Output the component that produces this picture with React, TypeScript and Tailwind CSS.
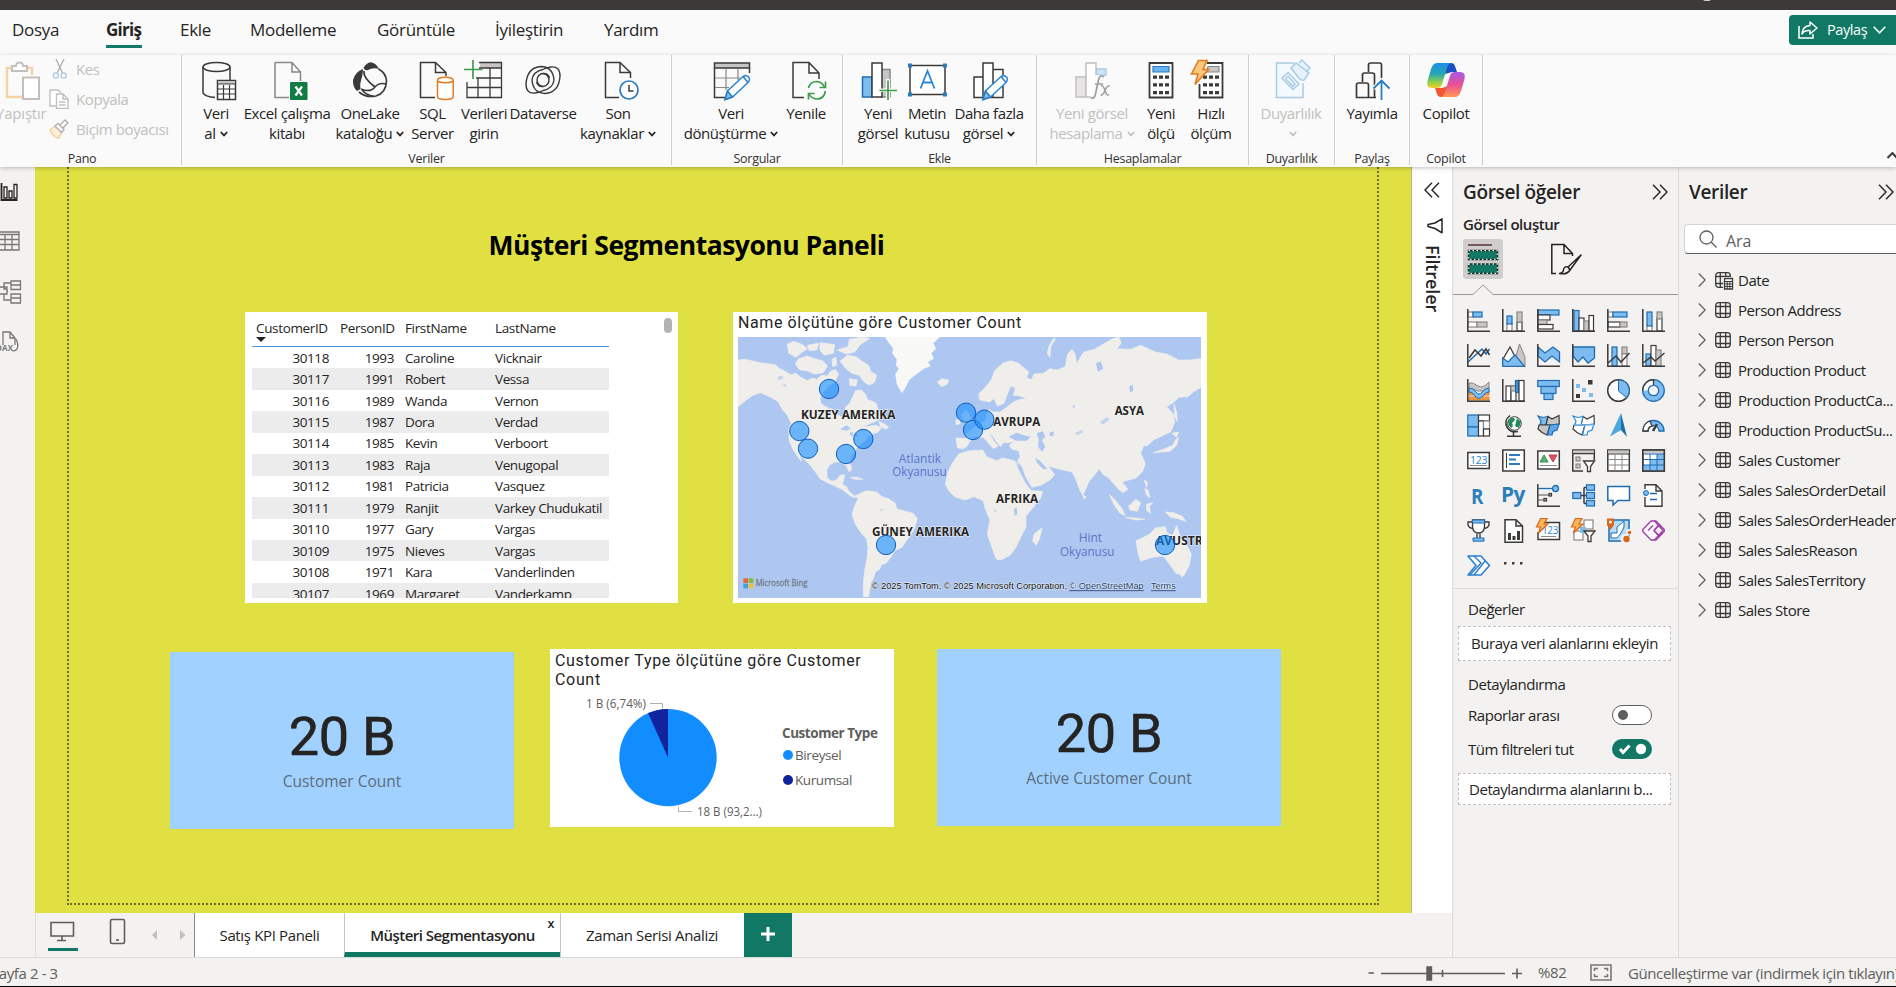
import React from "react";

const K = "#3b3a39";
const B = "#1f6cb0";
const F = "#7dbcf0";
const G = "#8a8886";
const GF = "#c8c6c4";

/* ---------- ribbon ---------- */

type RibbonItemProps = {
  box: string;
  lines: string[];
  caret?: boolean;
  disabled?: boolean;
  children?: React.ReactNode;
};

function Caret() {
  return (
    <svg viewBox="0 0 8 6" className="mt-[2px] ml-[4px] inline-block h-[6px] w-[8px]" fill="none" stroke="currentColor" strokeWidth="1.700">
      <path d="M.8 1 4 4.4 7.2 1" />
    </svg>
  );
}

function RibbonItem({ box, lines, caret, disabled, children }: RibbonItemProps) {
  return (
    <div className={"flex shrink-0 flex-col items-center whitespace-nowrap text-[15px] leading-[20px] tracking-[-0.400px] " + (disabled ? "text-[#c2c0be] " : "text-[#252423] ") + box}>
      <svg viewBox="0 0 40 40" className="mb-[3px] h-[40px] w-[40px] shrink-0 overflow-visible" fill="none" strokeWidth="1.5">
        {children}
      </svg>
      {lines.map((l, i) => (
        <div key={l} className="flex h-[20px] items-center">
          <span>{l}</span>
          {caret && i === lines.length - 1 && <Caret />}
        </div>
      ))}
    </div>
  );
}

function Group({ box, label, labelPad = "", children }: { box: string; label: string; labelPad?: string; children: React.ReactNode }) {
  return (
    <div className={"flex h-[110px] shrink-0 flex-col border-r border-[#d0cecc] " + box}>
      <div className="flex h-[97px] shrink-0 pt-[5px]">{children}</div>
      <div className={"shrink-0 text-center text-[12.500px] leading-[13px] tracking-[-0.250px] text-[#323130] " + labelPad}>{label}</div>
    </div>
  );
}

const pencil = (
  <>
    <path d="M14 39.5 16.5 31 32 16.5Q35 14.5 37.5 17 39.5 19.5 37 22.5L21.5 37Z" fill="#fff" stroke="#2b88d8" />
    <path d="M14 39.5 16.5 31 21.5 37ZM32 16.5 37 22.5" fill="#7dbcf0" stroke="#2b7cc0" />
  </>
);

function Ribbon() {
  return (
    <div className="flex h-[112px] bg-[#fafafa]">
      <Group box="w-[182px]" label="Pano" labelPad="pr-[17px]">
        <div className="flex text-[15px] tracking-[-0.400px] text-[#c2c0be]">
          <div className="flex w-[46px] flex-col">
            <svg viewBox="0 0 46 40" className="mb-[3px] h-[40px] w-[46px]" fill="none" strokeWidth="2">
              <path d="M13 8H7V37H22M26 8H32V15" stroke="#f6d3a5" strokeWidth="2.4" />
              <path d="M12 11V6H16Q16 2.5 19.5 2.5T23 6H27V11Z" stroke="#c2c0be" fill="#fff" />
              <path d="M23 17.5H39V39H23Z" stroke="#c2c0be" fill="#fff" />
            </svg>
            <span className="-ml-[4px] leading-[20px] tracking-[-0.200px]">Yapıştır</span>
          </div>
          <div className="-mt-px flex flex-col pl-[3px]">
            <div className="flex h-[20px] items-center gap-[7px]">
              <svg viewBox="0 0 20 20" className="h-[20px] w-[20px]" fill="none" strokeWidth="1.3">
                <path d="M7 0 13.5 14M15 0 8 14" stroke="#b0aeac" />
                <circle cx="6.800" cy="16.500" r="2.600" stroke="#a9cbe4" />
                <circle cx="14.600" cy="16.500" r="2.600" stroke="#a9cbe4" />
              </svg>
              <span>Kes</span>
            </div>
            <div className="mt-[10px] flex h-[20px] items-center gap-[7px]">
              <svg viewBox="0 0 20 20" className="h-[20px] w-[20px]" fill="#fff" stroke="#c2c0be" strokeWidth="1.4">
                <path d="M7 17H1V1H9L12 4" />
                <path d="M7.500 5H14L19 10V19.500H7.500ZM14 5V10H19M10 13H16.500M10 16H16.500" />
              </svg>
              <span>Kopyala</span>
            </div>
            <div className="mt-[10px] flex h-[20px] items-center gap-[7px]">
              <svg viewBox="0 0 20 20" className="h-[20px] w-[20px]" fill="none" strokeWidth="1.4">
                <path d="M7 7 1 10.500Q3 17 9.500 19.500L13 13Z" fill="#fdeed8" stroke="#f3cfa0" />
                <path d="M6 7 9 4.500 15 10.500 12.500 13.500ZM11 6 16 1 18.800 3.800 14 9" fill="#fff" stroke="#b0aeac" />
              </svg>
              <span>Biçim boyacısı</span>
            </div>
          </div>
        </div>
      </Group>

      <Group box="w-[490px]" label="Veriler">
        <RibbonItem box="ml-[12px] w-[44px]" lines={["Veri", "al"]} caret>
          <path d="M7 7V33Q10 37 19 37.500M34 7V20" stroke={K} />
          <ellipse cx="20.500" cy="7" rx="13.500" ry="4.500" stroke={K} />
          <path d="M21.500 20.500H39.500V39.500H21.500Z" fill="#fff" stroke={K} />
          <path d="M21.500 20.500H39.500V24H21.500Z" fill={GF} stroke={K} strokeWidth="1" />
          <path d="M21.500 29H39.500M21.500 34H39.500M27.500 25V39M33.500 25V39" stroke={K} strokeWidth="1.200" />
        </RibbonItem>
        <RibbonItem box="ml-[4px] w-[90px]" lines={["Excel çalışma", "kitabı"]}>
          <path d="M8 2.500H25L33.500 12V21M25 2.500V12H33.500M8 2.500V37.500H22" stroke={G} />
          <rect x="23" y="22" width="17.500" height="18" rx="1" fill="#107c41" />
          <path d="M28.500 26.500 35 35.500M35 26.500 28.500 35.500" stroke="#fff" strokeWidth="2.200" />
        </RibbonItem>
        <RibbonItem box="w-[76px]" lines={["OneLake", "kataloğu"]} caret>
          <path d="M28.500 9Q36 13 36.500 21 36 33 26 36 16 38 9 32" stroke={K} strokeWidth="1.700" />
          <path d="M13 9Q5 12 3 20 2.500 27 7 31L10.500 29Q9.500 24 12 17 13 12 13 9Z" fill={K} />
          <path d="M13.500 8Q16 3 21 2.300 26 3 29 9 23 7 18 10 15 11 13.500 8Z" fill={K} />
          <path d="M14 11Q13 18 25 27" stroke={K} strokeWidth="1.800" />
          <path d="M11 29Q20 33 25 27 29 22 36.500 24M12 30Q16 35 24 36.500" stroke={K} strokeWidth="1.500" />
        </RibbonItem>
        <RibbonItem box="ml-[1.500px] w-[46px]" lines={["SQL", "Server"]}>
          <path d={"M22 37.500H7.500V2.500H22.500L33 12.500V16M22.500 2.500V12.500H33"} stroke={K} />
          <path d="M24.500 20.500V36.500Q24.500 39.500 32.500 39.500T40.200 36.500V20.500" stroke="#e07b24" fill="#fff" />
          <ellipse cx="32.300" cy="20" rx="7.800" ry="2.800" stroke="#e07b24" fill="#fff" />
        </RibbonItem>
        <RibbonItem box="ml-[4.500px] w-[48px]" lines={["Verileri", "girin"]}>
          <path d="M16 2.500H37.500V8H16Z" fill={GF} />
          <path d="M15 2.500H37.500V37.500H3V22M37.500 8H15M37.500 18H12M37.500 27.500H3M14 18V37.500M26 8V37.500" stroke={K} strokeWidth="1.300" />
          <path d="M9 0V19M0 9.500H18.500" stroke="#3f9c4d" strokeWidth="1.700" />
        </RibbonItem>
        <RibbonItem box="ml-[1px] w-[68px]" lines={["Dataverse"]}>
          <path d="M12 33Q3 34 3 24 4 7.500 18 6.500 30 7 31 20 30 28.500 20 30.500" stroke={K} strokeWidth="1.400" />
          <path d="M28 7Q37 6 37 16 36 32.500 22 33.500 10 33 9 20 10 11.500 20 9.500" stroke={K} strokeWidth="1.400" />
          <path d="M12 33Q17 32.500 20 30.500M28 7Q23 7.500 20 9.500" stroke={K} strokeWidth="1.400" />
          <ellipse cx="20" cy="20" rx="6" ry="6.500" stroke={K} strokeWidth="1.400" />
          <path d="M20 13.500Q25 13 26.500 18M20 26.500Q15 27 13.500 22" stroke={K} strokeWidth="1.400" />
        </RibbonItem>
        <RibbonItem box="ml-[1px] w-[80px]" lines={["Son", "kaynaklar"]} caret>
          <path d="M21 37.500H7.500V2.500H22L32.500 12.500V18M22 2.500V12.500H32.500" stroke={K} />
          <circle cx="31" cy="30" r="9" stroke="#2b7cc0" fill="#fff" strokeWidth="1.700" />
          <path d="M31 25V31H35.500" stroke={K} />
        </RibbonItem>
      </Group>

      <Group box="w-[171px]" label="Sorgular">
        <RibbonItem box="ml-[11px] w-[96px]" lines={["Veri", "dönüştürme"]} caret>
          <path d="M3.500 3H38.500V8H3.500Z" fill={GF} stroke={K} />
          <path d="M3.500 8V37.500H14M38.500 8V13" stroke={K} />
          <path d="M4 18H29M4 27.500H18M15 8V30M27 8V20" stroke={G} strokeWidth="1.200" />
          {pencil}
        </RibbonItem>
        <RibbonItem box="ml-[4px] w-[46px]" lines={["Yenile"]}>
          <path d="M18 37.500H7V2.500H23L33 13V19M23 2.500V13H33" stroke={K} />
          <path d="M22.500 28Q24 21.500 31 21.500 36 22 38.500 27M39.500 31Q38 39 31 39 25 38.500 23 34" stroke="#3f9c4d" strokeWidth="1.700" />
          <path d="M39.500 21.500V27.500H33.500M22.500 39.500V33.500H28.500" stroke="#3f9c4d" strokeWidth="1.700" />
        </RibbonItem>
      </Group>

      <Group box="w-[194px]" label="Ekle">
        <RibbonItem box="ml-[12px] w-[46px]" lines={["Yeni", "görsel"]}>
          <path d="M23 9.500H32V37H23Z" fill={GF} stroke={G} />
          <path d="M4.500 17H14V37H4.500Z" fill="#7dbcf0" stroke="#1f6cb0" />
          <path d="M14 3H24V37H14Z" fill="#fff" stroke={K} />
          <path d="M21 28.500H28V19H32V28.500H39V32H32V40H28V32H21Z" fill="#fafafa" />
          <path d="M30 20.500V40M21.500 30.500H39" stroke="#3f9c4d" strokeWidth="1.700" />
        </RibbonItem>
        <RibbonItem box="ml-[2px] w-[48px]" lines={["Metin", "kutusu"]}>
          <path d="M3 5.500H38V34.500H3Z" fill="#fff" stroke={K} />
          <path d="M13.500 28.500 20.500 11 27.500 28.500M16 22.500H25" stroke="#2b88d8" strokeWidth="1.800" />
          <path d="M1 3.500H5V7.500H1ZM36 3.500H40V7.500H36ZM1 32.500H5V36.500H1ZM36 32.500H40V36.500H36Z" fill="#2b7cc0" />
        </RibbonItem>
        <RibbonItem box="ml-[1px] w-[74px]" lines={["Daha fazla", "görsel"]} caret>
          <path d="M5 17H14V37.500H5ZM24 9.500H34V37.500H24ZM14 3H24V37.500H14Z" stroke={K} fill="#fff" />
          {pencil}
        </RibbonItem>
      </Group>

      <Group box="w-[212px]" label="Hesaplamalar">
        <RibbonItem box="ml-[12px] w-[86px]" lines={["Yeni görsel", "hesaplama"]} caret disabled>
          <path d="M4 17H14V37H4Z" fill="#e8e6e4" stroke="#c2c0be" />
          <path d="M24 9H34V15H24Z" fill="#cfe4f7" stroke="#a9cbe4" />
          <path d="M14 3H24V37H14Z" fill="#fff" stroke="#c2c0be" />
          <path d="M23 15H28V38H19Z" fill="#fafafa" />
          <path d="M32 17Q28 14 26.500 20L23.500 34Q22.500 39 19 38M23 24H31" stroke="#a19f9d" strokeWidth="1.700" />
          <path d="M29 26Q31 25 32 28L34 33Q35 36 37 34.500M37.500 26Q35 25.500 33 30.500T28.500 35" stroke="#a19f9d" strokeWidth="1.500" />
        </RibbonItem>
        <RibbonItem box="ml-[7px] w-[38px]" lines={["Yeni", "ölçü"]}>
          <path d="M8.500 3H31.500V37.500H8.500Z" fill="#fff" stroke={K} strokeWidth="1.800" />
          <path d="M12 6.500H28V12H12Z" fill="#6bb4f2" stroke="#2b7cc0" strokeWidth="1.200" />
          <path d="M14 15.500V36M20 15.500V36M26 15.500V36" stroke={K} strokeWidth="4" strokeDasharray="3.200 4.600" />
        </RibbonItem>
        <RibbonItem box="ml-[9px] w-[44px]" lines={["Hızlı", "ölçüm"]}>
          <path d="M16 3H31.500V37.500H8.500V24" fill="#fff" stroke={K} strokeWidth="1.800" />
          <path d="M17 6.500H28V12H15Z" fill={GF} stroke={G} strokeWidth="1.200" />
          <path d="M14 15.500V36M20 15.500V36M26 15.500V36" stroke={K} strokeWidth="4" strokeDasharray="3.200 4.600" />
          <path d="M7.500 0.500H16L12 9.500H17.500L4 24.500 7 14H0.500Z" fill="#fbc77d" stroke="#e07b24" strokeWidth="1.600" />
        </RibbonItem>
      </Group>

      <Group box="w-[86px]" label="Duyarlılık">
        <RibbonItem box="ml-[7px] w-[70px]" lines={["Duyarlılık", ""]} caret disabled>
          <path d="M23 3H5.500V37.500H32V23" stroke="#a9cbe4" fill="#f3f9fe" />
          <path d="M11 18 17 12.500 28 24 22 29.500ZM14.500 18.500 17 16 24 24 22 26.500Z" stroke="#a9cbe4" />
          <path d="M20 8 25 3 38 13 33 20Q30 21 27 17ZM28 3 31 0 39 8 35 12" stroke="#a9cbe4" fill="#e6f2fb" />
        </RibbonItem>
      </Group>

      <Group box="w-[75px]" label="Paylaş">
        <RibbonItem box="ml-[7px] w-[60px]" lines={["Yayımla"]}>
          <path d="M24 37.500H4.500V25Q4.500 23 6.500 23H14.500Q16.500 23 16.500 25V37.500M10.500 22V15Q10.500 13 12.500 13H20.500Q22.500 13 22.500 15V37.500M16.500 12V5Q16.500 3 18.500 3H27.500Q29.500 3 29.500 5V18" stroke={K} strokeWidth="1.700" />
          <path d="M29.500 40V21M21.500 28.500 29.500 20.500 37.500 28.500" stroke="#fafafa" strokeWidth="4" />
          <path d="M29.500 40V21M21.500 28.500 29.500 20.500 37.500 28.500" stroke="#2b7cc0" strokeWidth="1.800" />
        </RibbonItem>
      </Group>

      <Group box="w-[73px]" label="Copilot">
        <RibbonItem box="ml-[7px] w-[58px]" lines={["Copilot"]}>
          <defs>
            <linearGradient id="cpA" x1="0" y1="0" x2="0" y2="1">
              <stop offset="0" stopColor="#1a8fe8" />
              <stop offset=".45" stopColor="#27a8b0" />
              <stop offset=".75" stopColor="#8ccf4d" />
              <stop offset="1" stopColor="#f5cf22" />
            </linearGradient>
            <linearGradient id="cpB" x1="0" y1="0" x2="0" y2="1">
              <stop offset="0" stopColor="#a558e8" />
              <stop offset=".5" stopColor="#ea4f94" />
              <stop offset="1" stopColor="#ff9a52" />
            </linearGradient>
          </defs>
          <path d="M20 3H25Q28 3 29 6L31 12H26L19 14Z" fill="#1d4fc4" />
          <path d="M19 37H15Q12 37 11 34L9 28H16L22 26Z" fill="#f0582f" />
          <path d="M11 3H25Q22 4 21 8L16 24Q15 28 11 28H6Q0 28 1.500 21L5 9Q7 3 11 3Z" fill="url(#cpA)" />
          <path d="M29 37H15Q18 36 19 32L24 16Q25 12 29 12H34Q40 12 38.500 19L35 31Q33 37 29 37Z" fill="url(#cpB)" />
        </RibbonItem>
      </Group>
      <div className="flex flex-1 items-end justify-end pb-[8px]">
        <svg viewBox="0 0 9 7" className="h-[7px] w-[9px]" fill="none" stroke={K} strokeWidth="2">
          <path d="M.5 6 5.500 1 10 6" />
        </svg>
      </div>
    </div>
  );
}

/* ---------- canvas ---------- */

const rows = [
  ["30118", "1993", "Caroline", "Vicknair"],
  ["30117", "1991", "Robert", "Vessa"],
  ["30116", "1989", "Wanda", "Vernon"],
  ["30115", "1987", "Dora", "Verdad"],
  ["30114", "1985", "Kevin", "Verboort"],
  ["30113", "1983", "Raja", "Venugopal"],
  ["30112", "1981", "Patricia", "Vasquez"],
  ["30111", "1979", "Ranjit", "Varkey Chudukatil"],
  ["30110", "1977", "Gary", "Vargas"],
  ["30109", "1975", "Nieves", "Vargas"],
  ["30108", "1971", "Kara", "Vanderlinden"],
  ["30107", "1969", "Margaret", "Vanderkamp"],
];

function CustomerTable() {
  return (
    <div className="flex h-[291px] w-[433px] overflow-hidden bg-white pl-[7px] text-[13.500px] tracking-[-0.400px] text-[#252423]">
      <div className="h-[286px] w-[357px] overflow-hidden">
        <div className="flex h-[35px] border-b border-[#4a94d0] pt-[8px] leading-[17px] tracking-[-0.350px]">
          <div className="w-[88px] pl-[4px]">
            CustomerID
            <svg viewBox="0 0 10 5" className="h-[5px] w-[10px]">
              <path d="M0 0H10L5 5Z" fill="#252423" />
            </svg>
          </div>
          <div className="w-[65px]">PersonID</div>
          <div className="w-[90px]">FirstName</div>
          <div>LastName</div>
        </div>
        {rows.map((r, i) => (
          <div key={r[0]} className={"flex h-[21.450px] items-center leading-[20px] " + (i % 2 ? "bg-[#ececec]" : "bg-white")}>
            <div className="w-[77px] text-right">{r[0]}</div>
            <div className="w-[65px] text-right">{r[1]}</div>
            <div className="w-[101px] pl-[11px]">{r[2]}</div>
            <div className="whitespace-nowrap">{r[3]}</div>
          </div>
        ))}
      </div>
      <div className="mt-[6px] ml-[55px] h-[15px] w-[8px] rounded-full bg-[#b3b3b3]" />
    </div>
  );
}

const bubbles = [
  [327, 267],
  [238, 393],
  [264, 446],
  [378, 462],
  [430, 417],
  [738, 338],
  [759, 390],
  [793, 359],
  [498, 735],
  [1335, 735],
];

function WorldMap() {
  return (
    <svg viewBox="54 111 1389 783" preserveAspectRatio="none" className="h-[261px] w-[463px] font-['Open_Sans','Noto_Sans',sans-serif]">
      <rect x="54" y="111" width="1389" height="783" fill="#aec7f1" />
      <g fill="#f0eeea" stroke="#f0eeea" strokeWidth="2" strokeLinejoin="round">
        <path d="M54 180 75 178 95 182 120 188 150 192 165 194 180 206 195 214 212 224 228 220 240 230 262 242 278 234 290 238 305 226 322 228 332 214 346 208 356 222 344 246 326 258 308 278 300 296 304 312 320 322 342 330 356 346 370 354 380 340 376 322 390 308 398 290 406 272 424 270 436 282 444 300 458 304 468 310 474 328 486 344 484 356 462 366 446 372 432 382 452 378 470 376 484 384 474 396 456 402 446 408 436 422 424 430 412 440 406 452 394 468 388 486 396 508 388 516 378 496 360 486 344 486 328 496 320 510 322 534 336 544 350 540 360 526 374 524 370 542 366 552 380 560 388 576 404 588 424 580 418 592 398 592 384 582 366 568 344 558 322 548 300 536 288 518 268 492 248 474 238 458 244 484 232 468 218 446 208 422 206 390 213 368 202 346 188 330 174 304 152 292 122 278 98 286 76 302 54 320Z" />
        <path d="M202 132 222 124 248 134 262 146 244 158 228 172 206 160ZM236 176 262 168 284 176 308 182 322 198 310 218 282 222 262 212 240 210 226 192ZM262 136 296 130 290 150 268 152ZM300 128 344 134 340 160 312 166 300 150ZM352 150 384 140 388 118 430 111 448 116 420 134 404 156 380 162ZM360 184 382 166 408 170 424 182 446 196 452 214 470 226 464 246 448 256 432 246 418 226 396 220 378 206ZM336 178 348 172 350 196 338 200ZM388 236 412 240 408 258 390 256ZM476 364 492 372 506 380 498 388 482 380Z" />
        <path d="M652 246 666 236 686 240 682 252 664 260Z" />
        <path d="M420 580 440 572 470 576 486 590 506 596 526 610 530 626 556 634 580 640 592 656 584 684 572 706 556 726 546 742 524 752 512 772 498 790 484 794 480 806 466 816 460 836 452 850 446 890 430 890 430 850 434 812 440 780 444 746 440 718 424 700 408 676 396 646 402 622 412 600Z" />
        <path d="M716 462 745 453 788 450 800 470 830 482 848 474 884 482 894 506 914 546 934 572 968 574 962 594 940 622 918 648 918 680 904 708 888 742 870 766 842 780 828 776 816 742 802 702 810 660 796 628 790 602 762 590 736 600 706 592 686 572 676 552 684 516 696 492Z" />
        <path d="M966 684 958 718 948 736 938 722 942 702Z" />
        <path d="M708 414 744 416 736 402 750 392 774 374 796 362 802 340 806 328 818 336 840 336 860 322 880 306 900 298 920 296 900 288 880 286 886 264 872 258 862 282 852 310 832 318 822 296 808 306 780 300 776 282 796 262 814 240 824 212 848 190 872 182 896 190 926 216 920 232 934 240 942 222 970 220 990 206 1012 210 1036 200 1042 164 1056 148 1066 164 1070 192 1082 170 1092 156 1124 148 1150 132 1178 116 1196 111 1204 130 1190 146 1232 148 1262 136 1306 156 1340 162 1376 180 1410 180 1443 176 1443 262 1420 276 1404 290 1378 292 1362 306 1340 320 1360 342 1364 366 1352 396 1326 408 1300 420 1284 436 1270 438 1262 460 1276 490 1268 514 1248 534 1226 540 1206 546 1224 568 1208 578 1194 566 1180 550 1164 532 1150 524 1138 506 1124 524 1106 546 1098 566 1088 586 1078 566 1066 534 1056 516 1030 510 1006 504 984 498 996 514 1004 524 990 540 962 556 936 562 924 542 906 512 890 488 900 470 896 452 876 448 868 436 884 424 866 428 850 428 842 440 830 426 818 408 806 398 822 424 834 438 820 446 808 432 790 412 766 410 750 422 742 438 730 446 712 444Z" />
        <path d="M724 344 738 330 750 348 758 366 738 374 730 360ZM708 360 722 356 718 372 708 374ZM1376 412 1370 436 1350 454 1326 456 1300 458 1330 448 1358 436 1366 420ZM1356 400 1376 396 1370 412ZM1362 312 1370 336 1372 364 1364 350ZM1168 584 1184 598 1204 624 1216 646 1200 640 1182 614ZM1226 618 1248 598 1262 608 1252 634 1230 630ZM1216 652 1244 654 1274 658 1246 660ZM1280 612 1298 608 1288 620 1292 640 1280 632ZM1336 636 1360 638 1386 648 1398 664 1374 656 1352 652ZM1274 566 1284 570 1290 594 1280 586ZM1272 540 1282 546 1280 562ZM1088 584 1098 590 1092 598ZM982 160 988 136 1002 114 1006 118 992 140 990 172ZM390 532 412 532 428 538 404 538Z" />
        <path d="M1248 722 1266 714 1290 702 1306 684 1336 680 1342 700 1358 706 1370 676 1380 710 1398 732 1414 762 1408 796 1392 826 1368 820 1350 794 1330 768 1296 772 1262 784 1254 760ZM1380 822 1392 824 1386 832Z" />
      </g>
      <path d="M495 111 506 128 520 146 516 160 530 178 528 196 536 206 526 222 530 252 546 280 558 260 568 240 590 222 612 206 632 198 624 186 642 176 634 160 648 146 640 130 660 111Z" fill="#f8f8f7" />
      <g fill="#aec7f1">
        <path d="M866 410 890 398 906 404 932 410 920 422 888 422ZM950 400 968 394 976 410 966 420 976 440 966 456 954 440 956 420ZM988 398 1002 394 1000 408 990 408ZM360 388 380 376 392 386 378 392ZM388 398 400 396 396 412ZM398 404 416 402 410 412ZM882 628 890 622 892 642 884 648ZM328 322 334 334 330 344ZM1128 190 1142 184 1150 206 1134 216ZM1228 258 1238 254 1240 272 1230 278ZM892 482 906 502 918 536 930 562 922 556 900 512ZM945 474 960 482 982 506 970 508 952 490Z" />
        <path d="M1066 398 1086 390 1090 396 1070 406ZM1140 366 1160 352 1170 358 1148 374ZM172 232 186 226 190 236 176 240ZM186 256 198 252 198 262ZM478 626 490 628 484 634ZM822 630 830 630 826 638ZM1056 318 1066 314 1062 326Z" opacity=".7" />
      </g>
      <g fontWeight="700" fontSize="37" fill="#252423" stroke="#f5f5f5" strokeWidth="3" paintOrder="stroke">
        <text x="243" y="357" textLength="283" lengthAdjust="spacingAndGlyphs">KUZEY AMERIKA</text>
        <text x="820" y="377" textLength="141" lengthAdjust="spacingAndGlyphs">AVRUPA</text>
        <text x="1184" y="345" textLength="88" lengthAdjust="spacingAndGlyphs">ASYA</text>
        <text x="828" y="609" textLength="126" lengthAdjust="spacingAndGlyphs">AFRIKA</text>
        <text x="456" y="707" textLength="291" lengthAdjust="spacingAndGlyphs">GÜNEY AMERIKA</text>
        <text x="1308" y="734" textLength="165" lengthAdjust="spacingAndGlyphs">AVUSTRA</text>
      </g>
      <g fontSize="36" fill="#5b75c9">
        <text x="536" y="489" textLength="127" lengthAdjust="spacingAndGlyphs">Atlantik</text>
        <text x="517" y="529" textLength="163" lengthAdjust="spacingAndGlyphs">Okyanusu</text>
        <text x="1076" y="726" textLength="70" lengthAdjust="spacingAndGlyphs">Hint</text>
        <text x="1020" y="767" textLength="163" lengthAdjust="spacingAndGlyphs">Okyanusu</text>
      </g>
      {bubbles.map(([x, y]) => (
        <circle key={x} cx={x} cy={y} r="29" fill="#118dff" fillOpacity=".6" stroke="#0f5ec0" strokeWidth="3" />
      ))}
      <path d="M70 835H84V849H70Z" fill="#e2683c" />
      <path d="M86 835H100V849H86Z" fill="#86bb40" />
      <path d="M70 851H84V865H70Z" fill="#3fa0e0" />
      <path d="M86 851H100V865H86Z" fill="#f2bf3a" />
      <text x="107" y="859" fontSize="27" fill="#737b88" stroke="#737b88" strokeWidth=".8" textLength="155" lengthAdjust="spacingAndGlyphs">Microsoft Bing</text>
      <g fontSize="28" className="font-['Liberation_Sans',sans-serif]" fill="#101010" stroke="#e6edf8" strokeWidth="3" paintOrder="stroke">
        <text x="455" y="866" textLength="586" lengthAdjust="spacingAndGlyphs">© 2025 TomTom, © 2025 Microsoft Corporation,</text>
        <text x="1048" y="866" textLength="223" lengthAdjust="spacingAndGlyphs" fill="#24406f">© OpenStreetMap</text>
        <text x="1293" y="866" textLength="74" lengthAdjust="spacingAndGlyphs" fill="#24406f">Terms</text>
      </g>
      <path d="M1048 872H1271M1293 872H1367" stroke="#24406f" strokeWidth="2.500" />
    </svg>
  );
}

function MapCard() {
  return (
    <div className="flex h-[291px] w-[474px] flex-col bg-white pl-[5px]">
      <div className="h-[25px] font-['Roboto',sans-serif] text-[16px] leading-[21px] tracking-[0.600px] text-[#252423]">Name ölçütüne göre Customer Count</div>
      <WorldMap />
    </div>
  );
}

function Kpi({ label }: { label: string }) {
  return (
    <div className="flex h-[177px] w-[344px] flex-col items-center bg-[#a0d1ff] pt-[52px]">
      <div className="font-['Roboto',sans-serif] text-[54px] leading-[65px] tracking-[-0.300px] text-[#252423] [-webkit-text-stroke:0.6px_#252423]">20 B</div>
      <div className="-mt-[0.500px] text-[15.500px] leading-[24px] text-[#5d6d7c]">{label}</div>
    </div>
  );
}

function PieCard() {
  return (
    <div className="flex h-[178px] w-[344px] flex-col bg-white">
      <div className="h-[44px] pt-[2px] pl-[5px] font-['Roboto',sans-serif] text-[16px] leading-[19px] tracking-[0.670px] text-[#252423]">
        Customer Type ölçütüne göre Customer
        <br />
        Count
      </div>
      <div className="flex">
        <svg viewBox="550 693 228 133" className="h-[133px] w-[228px] font-['Open_Sans','Noto_Sans',sans-serif]">
          <circle cx="668" cy="757.600" r="48.700" fill="#118dff" />
          <path d="M668 757.600V708.900A48.700 48.700 0 0 0 648.100 713.200Z" fill="#12239e" />
          <path d="M650 703.500H662.500V708.500M678.500 806.500V811.500H692" stroke="#b3b0ad" fill="none" />
          <text x="586" y="708" fontSize="12.500" fill="#605e5c" textLength="60" lengthAdjust="spacingAndGlyphs">1 B (6,74%)</text>
          <text x="697" y="816" fontSize="12.500" fill="#605e5c" textLength="65" lengthAdjust="spacingAndGlyphs">18 B (93,2...)</text>
        </svg>
        <div className="pt-[30px] pl-[4px] text-[13.500px] tracking-[-0.400px] text-[#605e5c]">
          <div className="leading-[20px] font-bold tracking-[-0.450px]">Customer Type</div>
          <div className="mt-[2px] flex h-[20px] items-center gap-[2px]">
            <span className="ml-px h-[10px] w-[10px] rounded-full bg-[#118dff]" />
            Bireysel
          </div>
          <div className="mt-[5px] flex h-[20px] items-center gap-[2px]">
            <span className="ml-px h-[10px] w-[10px] rounded-full bg-[#12239e]" />
            Kurumsal
          </div>
        </div>
      </div>
    </div>
  );
}

/* ---------- visual gallery ---------- */

const axes = <path d="M.8 0V22.200H23" stroke={K} strokeWidth="1.500" />;
const R = (x: number, y: number, w: number, h: number, f: string, s: string) => (
  <rect x={x} y={y} width={w} height={h} fill={f} stroke={s} strokeWidth="1.200" />
);
const bolt = <path d="M3.500-.5H10L7 5H11L1.500 14 3.500 8H-.5Z" fill="#fbb65c" stroke="#d9661a" strokeWidth="1.200" />;

const gallery: React.ReactNode[] = [
  <>{R(1, 3, 5, 5, "#fff", G)}{R(6, 3, 9, 5, F, B)}{R(1, 13, 9, 5, "#fff", G)}{R(10, 13, 10, 5, GF, G)}{axes}</>,
  <>{R(5, 14, 5, 8, "#fff", G)}{R(5, 7, 5, 8, F, B)}{R(15, 13, 5, 9, "#fff", K)}{R(15, 3, 5, 10, GF, G)}{axes}</>,
  <>{R(1, 1, 21, 5, F, B)}{R(1, 6, 12, 5, "#fff", K)}{R(1, 11, 9, 4.500, GF, G)}{R(1, 15.500, 15, 4.500, "#fff", K)}{axes}</>,
  <>{R(2, 1.500, 5, 20.500, F, B)}{R(7, 9, 5, 13, "#fff", K)}{R(12, 12, 5, 10, GF, G)}{R(17, 6.500, 4.500, 15.500, "#fff", K)}{axes}</>,
  <>{R(1, 3, 5, 5, "#fff", G)}{R(6, 3, 14, 5, F, B)}{R(1, 13, 12, 5, "#fff", K)}{R(13, 13, 7, 5, GF, G)}{axes}</>,
  <>{R(5, 16, 5, 6, "#fff", G)}{R(5, 3, 5, 14, F, B)}{R(15, 9, 5, 13, "#fff", K)}{R(15, 3, 5, 7, GF, G)}{axes}</>,
  <><path d="M1 18 15 5 19 10 22.500 5" stroke={B} strokeWidth="1.500" /><path d="M2 14 8 6 14 12 19 5 22.500 11" stroke={K} strokeWidth="1.500" />{axes}</>,
  <><path d="M11 22 17.500 0 23 13V22Z" fill={GF} stroke={G} /><path d="M1 15 8 3 18 22H1Z" fill="#fff" stroke={K} strokeWidth="1.300" /><path d="M.7 22V14L6 18 13 11 22.500 22.300Z" fill={F} stroke={B} strokeWidth="1.200" /></>,
  <><path d="M1 3 8 9 16 3 22.500 8V18L15 12 8 18 1 12Z" fill={F} stroke={B} strokeWidth="1.300" />{axes}</>,
  <><path d="M1 3H22.500V14L16 19 11 13 6 18 1 12Z" fill={F} stroke={B} strokeWidth="1.300" />{axes}</>,
  <>{R(5, 3, 5, 19, F, B)}{R(15, 3, 5, 7, GF, G)}{R(15, 10, 5, 12, "#fff", G)}<path d="M1 19 9 12 14 18 22.500 9" stroke={K} strokeWidth="1.500" />{axes}</>,
  <>{R(4, 10, 5, 12, F, B)}{R(9, 1.500, 5, 20.500, "#fff", K)}{R(14, 6, 5, 16, GF, G)}<path d="M1 19 9 13 13 17 22.500 9" stroke={K} strokeWidth="1.500" />{axes}</>,
  <><path d="M2 11H7V16H2ZM17 11H22V16H17ZM2 18H22V21H2Z" fill="#f7a14a" stroke="#e07b24" /><path d="M2 4Q6 3 11 7 16 10 22 3V9Q16 13 11 12 6 10 2 9Z" fill={GF} stroke={G} /><path d="M2 9Q7 9 9 13 12 17 15 13 18 9 22 9V13Q18 13 16 17 11 22 8 17 6 13 2 13Z" fill={F} stroke={B} />{axes}</>,
  <>{R(4, 7, 5, 15, "#fff", K)}{R(9, 7, 5, 15, "#fff", K)}{R(9, 7, 5, 5, GF, G)}{R(13.500, 1.500, 3.500, 12, "#3f8fd8", B)}{R(17, 1.500, 5, 20.500, "#fff", K)}{axes}</>,
  <>{R(.7, 1.500, 21.600, 6, F, B)}{R(4, 7.500, 15, 7, F, B)}{R(7, 14.500, 9, 6, F, B)}</>,
  <><path d="M16 1H20.500V5.500H16ZM4 15H8V19H4Z" fill={K} /><path d="M4 5H8V9H4ZM10 9H14V13H10ZM17 14H21V18H17Z" fill={F} />{axes}</>,
  <><circle cx="11.500" cy="11.500" r="10.800" fill="#fff" stroke={K} strokeWidth="1.500" /><path d="M11.500 1A10.500 10.500 0 0 1 19.500 18.500L11.500 12Z" fill={F} stroke={B} /></>,
  <><circle cx="11.500" cy="11.500" r="8.200" stroke={F} strokeWidth="5" /><path d="M11.500 3.300A8.200 8.200 0 0 0 3.300 11.500" stroke="#fff" strokeWidth="5" /><circle cx="11.500" cy="11.500" r="10.800" stroke={B} strokeWidth="1.300" /><circle cx="11.500" cy="11.500" r="5.200" stroke={B} strokeWidth="1.300" fill="#f3f2f1" /><path d="M.7 11.500A10.800 10.800 0 0 1 11.500.7V6" stroke={K} strokeWidth="1.300" /></>,
  <>{R(.8, 1, 10.700, 12, F, B)}{R(.8, 13, 10.700, 9, F, B)}{R(11.500, 1, 11, 6, "#fff", K)}{R(11.500, 7, 5, 15, "#fff", K)}{R(16.500, 7, 6, 8, "#fff", G)}{R(16.500, 15, 6, 7, "#fff", K)}</>,
  <><circle cx="12.500" cy="9.500" r="6.800" fill="#fff" stroke={K} /><path d="M8 5Q12 2 13 6L10 9Q12 13 9 14 6 11 6 8ZM15 4 19 8 17 14 13 12Z" fill="#1f8a5a" /><path d="M8 1.500Q1 7 5.500 14 9 19 16 17.500M11.500 18V22M5 22.200H19" stroke={K} strokeWidth="1.500" /></>,
  <><path d="M1 2 6 3.500 11 2.500 9 11H3L4 7Z" fill={F} stroke={B} strokeWidth="1.200" /><path d="M11 2.500 15 5 22 1.500 22.300 10 18 11H9Z" fill={GF} stroke={K} strokeWidth="1.200" /><path d="M2 11H13L10 21 5 18.500 1 15Z" fill={GF} stroke={K} strokeWidth="1.200" /><path d="M13 11 22 10 20 16 16 17.500 15 21 10.500 21Z" fill="#5ea6e6" stroke={B} strokeWidth="1.200" /></>,
  <><path d="M11 2.500 15 5 22 1.500 22.300 10 18 11H9Z" fill="#fff" stroke={K} strokeWidth="1.200" /><path d="M2 11H13L10 21 5 18.500 1 15Z" fill="#fff" stroke={K} strokeWidth="1.200" /><path d="M1 2 6 3.500 11 2.500 9 11H3L4 7Z" fill="#fff" stroke="#2b88d8" strokeWidth="1.200" /><path d="M13 11 22 10 20 16 16 17.500 15 21 10.500 21Z" fill="#fff" stroke="#2b88d8" strokeWidth="1.200" /><path d="M2 11H22" stroke={F} strokeWidth="1.200" /></>,
  <><path d="M14-1 3 22.500 14 16Z" fill="#4aa8dc" /><path d="M14-1 20 23 14 16Z" fill="#1e6fa8" /></>,
  <><path d="M1 17A10.500 10.500 0 0 1 22 17H17A5.500 5.500 0 0 0 6 17Z" fill={F} stroke={B} strokeWidth="1.300" /><path d="M1 17A10.500 10.500 0 0 1 8 7L10 12Q6 13 6 17Z" fill="#fff" stroke={K} strokeWidth="1.300" /><path d="M11 17 15 10" stroke={K} strokeWidth="2.500" /></>,
  <><rect x=".8" y="3.500" width="21.500" height="16" fill="#fff" stroke={K} strokeWidth="1.500" /><text x="3" y="14.500" fontSize="10.500" fill="#2b88d8" textLength="17">123</text><path d="M3 16.500H20" stroke={G} /></>,
  <><rect x=".8" y="1" width="21.500" height="21" fill="#fff" stroke={K} strokeWidth="1.500" /><path d="M4.500 4V19" stroke={K} /><path d="M7 6H18M7 10.500H14M7 15H18" stroke="#2b7cc0" strokeWidth="2" /></>,
  <><rect x=".8" y="2" width="21.500" height="18" fill="#fff" stroke={K} strokeWidth="1.500" /><path d="M3 13 7 6 11 13Z" fill="#5cb270" stroke="#2f8f4a" /><path d="M12 6H20L16 13Z" fill="#e0525e" stroke="#c53a45" /><path d="M3 16.500H20" stroke={G} /></>,
  <><path d="M11 22H.8V1H22.300V11M.8 4.500H22.300" fill="none" stroke={K} strokeWidth="1.500" /><path d="M1 1.500H22V4H1Z" fill={GF} />{R(4, 8, 4, 4, GF, G)}{R(4, 15, 4, 4, GF, G)}<path d="M11.500 12H22.500L18.500 17.500V22.500H15.500V17.500Z" fill="#fff" stroke={K} strokeWidth="1.300" /></>,
  <><rect x=".8" y="1" width="21.500" height="21" fill="#fff" stroke={K} strokeWidth="1.500" /><path d="M1 1.500H22V4.500H1Z" fill={GF} /><path d="M1 5H22" stroke={K} /><path d="M1 10.500H22M1 16H22M8 5V22M15 5V22" stroke={G} /></>,
  <><rect x=".8" y="1" width="21.500" height="21" fill="#fff" stroke={K} strokeWidth="1.500" /><path d="M1 1.500H22V4.500H1Z" fill={GF} /><path d="M15 5H22V22H1V16H15ZM8 16V11H15V22" fill={F} /><path d="M1 5H22M1 10.500H22M1 16H22M8 5V22M15 5V22" stroke={B} /><rect x=".8" y="1" width="21.500" height="21" stroke={K} strokeWidth="1.500" /></>,
  <text x="4" y="19.500" fontSize="21" fontWeight="700" fill="#2b7fb8" textLength="12" lengthAdjust="spacingAndGlyphs">R</text>,
  <text x="-1" y="17.500" fontSize="21" fontWeight="700" fill="#2b7fb8" textLength="24" lengthAdjust="spacingAndGlyphs">Py</text>,
  <><path d="M1 11H13M1 16H8" stroke={G} strokeWidth="1.300" /><path d="M1 4.500H16" stroke={B} strokeWidth="1.300" /><circle cx="18.500" cy="4.500" r="3" fill={F} stroke={B} strokeWidth="1.300" />{R(12, 9.500, 2.500, 2.500, GF, K)}{R(7, 14.500, 2.500, 2.500, GF, K)}{axes}</>,
  <><path d="M8 11.500H15M12 3.500V19.500M12 3.500H16M12 19.500H16" stroke={K} strokeWidth="1.500" />{R(.8, 8.500, 8, 6, F, B)}{R(14.500, .8, 8, 5.500, F, B)}{R(14.500, 8.500, 8, 6, F, B)}{R(14.500, 16.500, 8, 5.500, F, B)}</>,
  <path d="M.8 2.500H22.500V16.500H11L6 21V16.500H.8Z" fill="#fff" stroke="#1f6cb0" strokeWidth="1.500" />,
  <><path d="M3 5V.8H14L20 7V22.200H3V13M14 .8V7H20" fill="#fff" stroke={K} strokeWidth="1.400" /><circle cx="4" cy="9" r="2.500" fill={F} stroke={B} /><path d="M8 9.500H15M8 15.500H15" stroke={B} strokeWidth="1.400" /></>,
  <><path d="M5.500 1H17.500V8Q17 14 11.500 14 6 14 5.500 8ZM5.500 3H1V6Q2 9 6 9.500M17.500 3H22V6Q21 9 17 9.500M10 14V19M13 14V19" fill="#fff" stroke={K} strokeWidth="1.400" /><path d="M5.500 1H17.500V4H5.500ZM6 19H17V22.200H6Z" fill={F} stroke={B} /></>,
  <><path d="M3 .8H14L20.500 7V23.200H3ZM14 .8V7H20.500" fill="#fff" stroke={K} strokeWidth="1.500" /><path d="M6 14H9V21H6ZM10.500 17H13.500V21H10.500ZM15 12H18V21H15Z" fill={K} /></>,
  <><path d="M7 3.500H22.500V20.500H1V13" fill="#fff" stroke={K} strokeWidth="1.500" /><text x="5" y="15" fontSize="10" fill="#2b88d8" textLength="16">123</text><path d="M4 17.500H19" stroke={G} />{bolt}</>,
  <>{R(12, 1, 9, 9, "#fff", G)}{R(2, 12, 9, 9, "#fff", G)}<path d="M8 8H14V14H8Z" fill={F} />{bolt}<path d="M12 12H23L19 17V22.500H16V17Z" fill="#fff" stroke={K} strokeWidth="1.300" /></>,
  <><rect x="2" y="1" width="20" height="21" fill="#b9dcf8" stroke="#1f6cb0" strokeWidth="1.500" /><path d="M10 8 17 2V8L14 14 10 19H4V14H10Z" fill="#fff" stroke={B} /><path d="M0-.5H7V6L3.500 11 0 6Z" fill="#d9661a" /><circle cx="3.500" cy="3" r="1.500" fill="#fff" /><circle cx="18.500" cy="20" r="5" fill="#f3f2f1" /><circle cx="19.500" cy="20" r="3.200" fill="#d9661a" /><circle cx="22" cy="13" r="3" fill="#f3f2f1" /><circle cx="22.500" cy="13.500" r="1.800" fill="#d9661a" /></>,
  <><path d="M9 2 .8 10.500V12.500L9 21H12.500L16.500 16.500 12 11.500 16.500 6.500 12.500 2Z" fill="#fbf5fc" stroke="#9b3fa8" strokeWidth="1.300" strokeLinejoin="round" /><path d="M12.500 2H14L22.300 10.500V12.500L14 21H12.500M6 11.500 11 6.500M12 11.500 16.500 6.500 21 11.500 16.500 16.500 12 11.500" stroke="#9b3fa8" strokeWidth="1.300" strokeLinejoin="round" /></>,
  <><path d="M1 2H14L22.500 11.500 14 21H1L9 11.500Z" fill="#fff" stroke="#2b7fd0" strokeWidth="1.600" strokeLinejoin="round" /><path d="M7 2 14 9 3 21M18 7 7 21" stroke="#2b7fd0" strokeWidth="1.400" /></>,
  <path d="M2 8H4.500V10.500H2ZM10 8H12.500V10.500H10ZM18 8H20.500V10.500H18Z" fill={K} />,
];

function DoubleChevron({ flip }: { flip?: boolean }) {
  return (
    <svg viewBox="0 0 16 16" className={"h-[16px] w-[16px] " + (flip ? "rotate-180" : "")} fill="none" stroke="#252423" strokeWidth="1.400">
      <path d="M1 .8 8 8 1 15.200M8 .8 15 8 8 15.200" />
    </svg>
  );
}

function VisualsPane() {
  return (
    <div className="flex w-[226px] shrink-0 flex-col border-l border-[#dcdad8] bg-[#f3f2f1] text-[15px] tracking-[-0.450px] text-[#252423]">
      <div className="flex h-[51px] items-center justify-between pr-[10px] pb-[1px] pl-[10px]">
        <span className="text-[19px] leading-[24px] font-semibold tracking-[-0.350px]">Görsel öğeler</span>
        <DoubleChevron />
      </div>
      <div className="h-[21px] pl-[10px] leading-[12px] font-semibold">Görsel oluştur</div>
      <div className="flex h-[40px] pl-[10px]">
        <div className="h-[40px] w-[40px] rounded-[3px] bg-[#d0cecc]">
          <svg viewBox="0 0 40 40" className="h-[40px] w-[40px]" fill="none">
            <path d="M5 6H29" stroke="#5a2f35" strokeWidth="1.500" />
            <path d="M5.500 11.500H34.500V20.500H5.500ZM5.500 25H34.500V34.500H5.500Z" fill="#117865" stroke="#1c2b28" strokeWidth="1.500" />
            <path d="M5.500 11.500H34.500V20.500H5.500ZM5.500 25H34.500V34.500H5.500Z" stroke="#dcebe7" strokeWidth="1.500" strokeDasharray="1.500 2.500" />
          </svg>
        </div>
        <svg viewBox="0 0 32 32" className="mt-[4px] ml-[47px] h-[32px] w-[32px]" fill="none" stroke="#252423" strokeWidth="1.500">
          <path d="M6 30.500H1.800V1.500H14L22.500 10.500V13M14 1.500V10.500H22.500" />
          <path d="M31 12 18 24 20 27 31 12ZM18 24Q14 23 13.500 27 13 30 9.500 30.500 17 32 20 27" fill="#f3f2f1" strokeLinejoin="round" />
        </svg>
      </div>
      <svg viewBox="0 0 225 17" className="h-[17px] w-[225px]" fill="none" stroke="#9a9896">
        <path d="M0 15.500H20L30 6 40 15.500H225" />
      </svg>
      <div className="mt-[13px] grid grid-cols-[repeat(6,35px)] auto-rows-[35px] pl-[14px]">
        {gallery.map((g, i) => (
          <svg key={i} viewBox="0 0 23 23" className="h-[23px] w-[23px] overflow-visible font-['Open_Sans',sans-serif]" fill="none">
            {g}
          </svg>
        ))}
      </div>
      <div className="-mt-px border-t border-[#dcdad8]" />
      <div className="mt-[10px] pl-[15px] leading-[20px]">Değerler</div>
      <div className="mt-[7px] ml-[5px] flex h-[35px] w-[213px] items-center justify-center border border-dashed border-[#c2c0be] bg-white">Buraya veri alanlarını ekleyin</div>
      <div className="mt-[13px] pl-[15px] leading-[20px] font-medium">Detaylandırma</div>
      <div className="mt-[10px] flex h-[22px] items-center justify-between pr-[26px] pl-[15px]">
        <span>Raporlar arası</span>
        <span className="flex h-[20px] w-[40px] items-center rounded-full border border-[#605e5c] bg-white pl-[5px]">
          <span className="h-[10px] w-[10px] rounded-full bg-[#605e5c]" />
        </span>
      </div>
      <div className="mt-[12px] flex h-[22px] items-center justify-between pr-[26px] pl-[15px]">
        <span>Tüm filtreleri tut</span>
        <svg viewBox="0 0 40 20" className="h-[20px] w-[40px]">
          <rect width="40" height="20" rx="10" fill="#117865" />
          <path d="M8 10 11 13.500 17.500 6.500" stroke="#fff" strokeWidth="3" fill="none" />
          <circle cx="29" cy="10" r="5.200" fill="#fff" />
        </svg>
      </div>
      <div className="mt-[13px] ml-[5px] flex h-[32px] w-[213px] items-center border border-dashed border-[#c2c0be] bg-white pl-[10px]">Detaylandırma alanlarını b...</div>
    </div>
  );
}

const tables = [
  "Date",
  "Person Address",
  "Person Person",
  "Production Product",
  "Production ProductCa...",
  "Production ProductSu...",
  "Sales Customer",
  "Sales SalesOrderDetail",
  "Sales SalesOrderHeader",
  "Sales SalesReason",
  "Sales SalesTerritory",
  "Sales Store",
];

function DataPane() {
  return (
    <div className="flex w-[219px] shrink-0 flex-col overflow-hidden border-l border-[#dcdad8] bg-[#f3f2f1] text-[15px] tracking-[-0.470px] text-[#252423]">
      <div className="flex h-[52px] items-center justify-between pr-[3px] pb-[2px] pl-[10px]">
        <span className="text-[19px] leading-[24px] font-semibold tracking-[-0.350px]">Veriler</span>
        <DoubleChevron />
      </div>
      <div className="mt-[5px] ml-[5px] flex h-[30px] w-[240px] items-center rounded-[4px] border border-[#d6d4d2] border-b-[#605e5c] bg-white pl-[14px] text-[16px] text-[#605e5c]">
        <svg viewBox="0 0 18 18" className="mr-[9px] h-[18px] w-[18px]" fill="none" stroke="#605e5c" strokeWidth="1.300">
          <circle cx="7.500" cy="7.500" r="6.500" />
          <path d="M12.300 12.300 17.500 17.500" />
        </svg>
        <span className="pt-[3px] tracking-[-0.100px]">Ara</span>
      </div>
      <div className="mt-[11px]">
        {tables.map((t) => (
          <div key={t} className="flex h-[30px] items-center whitespace-nowrap">
            <svg viewBox="0 0 8 14" className="ml-[19px] h-[14px] w-[8px] shrink-0" fill="none" stroke="#605e5c" strokeWidth="1.300">
              <path d="M.8.5 7.200 7 .8 13.500" />
            </svg>
            <svg viewBox="0 0 16 16" className="mr-[7px] ml-[9px] h-[16px] w-[16px] shrink-0 overflow-visible" fill="none" stroke="#3b3a39" strokeWidth="1.300">
              <rect x=".7" y=".7" width="14.600" height="14.600" rx="3" />
              <path d="M5.300.7V15.300M10.700.7V15.300M.7 4.500H15.300M.7 11.500H15.300" />
              {t === "Date" && (
                <>
                  <path d="M8 5H19V18H8Z" fill="#f3f2f1" stroke="none" />
                  <path d="M9.500 6.500H17.500V17H9.500Z" fill="#fff" />
                  <path d="M9.500 9.500H17.500M9.500 12H17.500M9.500 14.500H17.500M12.200 9.500V17M14.800 9.500V17" strokeWidth="1" />
                </>
              )}
            </svg>
            <span>{t}</span>
          </div>
        ))}
      </div>
    </div>
  );
}

function FiltersPane() {
  return (
    <div className="flex w-[40px] shrink-0 flex-col items-center bg-white pt-[15px]">
      <DoubleChevron flip />
      <svg viewBox="0 0 16 16" className="mt-[20px] ml-[6px] h-[16px] w-[16px]" fill="none" stroke="#252423" strokeWidth="1.500">
        <path d="M15 .8V14.800L8 10.500 1 8.500V6.500L8 5Z" strokeLinejoin="round" />
      </svg>
      <div className="mt-[11px] ml-[1px] text-[18px] leading-[20px] font-semibold tracking-[-0.100px] text-[#252423] [writing-mode:vertical-rl]">Filtreler</div>
    </div>
  );
}

function SideNav() {
  return (
    <div className="w-[35px] shrink-0 overflow-hidden bg-[#f3f2f1]">
      <svg viewBox="0 0 35 200" className="h-[200px] w-[35px]" fill="none" stroke="#797775" strokeWidth="1.300">
        <path d="M1.500 16V33H17.500" stroke="#252423" strokeWidth="1.800" />
        <path d="M4 20H7V31H4ZM9 24H12V31H9ZM14 17.500H17V31H14Z" stroke="#252423" />
        <path d="M-4 65H19V83H-4ZM-4 67.500H19M-4 72.500H19M-4 77.500H19M5 67V83M12 67V83" />
        <path d="M11 114H20.500V122.500H11ZM11 127H20.500V136H11ZM11 118H20.500M11 131H20.500M-3 120H7V127H-3ZM7 122H4V116H11M4 127V133H11M7 124H8" />
        <path d="M3 178V165H10L15 171V178M10 165V171H15M16 172Q19 178 17 182 15 184.500 12 183.500" />
        <text x="-4" y="184" fontSize="8" fontWeight="700" fill="#797775" stroke="none" textLength="17">DAX</text>
      </svg>
    </div>
  );
}

/* ---------- footer ---------- */

function PageTabs() {
  return (
    <div className="flex h-[44px] text-[15px] tracking-[-0.350px] text-[#252423]">
      <div className="flex w-[159px] shrink-0 border-l border-[#e1dfdd]">
        <svg viewBox="36 913 158 44" className="h-[44px] w-[158px]" fill="none" stroke="#605e5c" strokeWidth="1.600">
          <path d="M51 922.500H73.500V936H51ZM62 936V940M57 940.500H66" />
          <path d="M48 949.500H78" stroke="#117865" strokeWidth="3" />
          <rect x="110.500" y="919.500" width="14" height="24" rx="1.500" />
          <path d="M116 940H119" />
          <path d="M157 930V940L152 935ZM180 930V940L185.500 935Z" fill="#c2c0be" stroke="none" />
        </svg>
      </div>
      <div className="flex w-[150px] items-center justify-center border-l border-[#8a8886] bg-white pt-[1px]">Satış KPI Paneli</div>
      <div className="flex w-[216px] flex-col items-end border-b-[5px] border-l border-b-[#117865] border-l-[#c8c6c4] bg-white">
        <span className="h-[13px] pt-[3px] pr-[6px] text-[12.500px] leading-[16px] font-semibold">x</span>
        <span className="w-full text-center text-[15px] leading-[19px] font-semibold tracking-[-0.520px]">Müşteri Segmentasyonu</span>
      </div>
      <div className="flex w-[184px] items-center justify-center border-l border-[#c8c6c4] bg-white pt-[1px] pr-[1px]">Zaman Serisi Analizi</div>
      <div className="flex w-[48px] items-center justify-center bg-[#117865] pb-[2px]">
        <svg viewBox="0 0 14 14" className="h-[14px] w-[14px]" stroke="#fff" strokeWidth="3">
          <path d="M7 0V14M0 7H14" />
        </svg>
      </div>
    </div>
  );
}

function StatusBar() {
  return (
    <div className="flex h-[30px] items-center overflow-hidden border-t border-b border-t-[#dcdad8] border-b-black bg-[#f3f2f1] text-[15px] tracking-[-0.400px] whitespace-nowrap text-[#605e5c]">
      <span className="-ml-[9px] w-[1379px] shrink-0 pt-[2px]">Sayfa 2 - 3</span>
      <svg viewBox="1370 957 160 28" className="h-[28px] w-[160px] shrink-0 overflow-visible" stroke="#605e5c" strokeWidth="1.400">
        <path d="M1368.500 972H1374M1381 972.500H1505M1442.500 969V976M1512 972.500H1522M1517 967.500V977.500" strokeWidth="1.600" />
        <path d="M1427 966H1431.500V979H1427Z" fill="#605e5c" />
      </svg>
      <span className="w-[60px] shrink-0 pl-[8px]">%82</span>
      <svg viewBox="0 0 22 17" className="h-[17px] w-[22px] shrink-0" fill="none" stroke="#797775" strokeWidth="1.600">
        <path d="M1 1H21V16H1ZM4.500 7V4.500H8M14 4.500H17.500V7M17.500 10V12.500H14M8 12.500H4.500V10" />
      </svg>
      <span className="pt-[3px] pl-[16px]">Güncelleştirme var (indirmek için tıklayın)</span>
    </div>
  );
}

export default function App() {
  return (
    <div className="flex h-[987px] w-[1896px] flex-col overflow-hidden bg-[#f3f2f1] font-['Open_Sans','Noto_Sans',sans-serif]">
      <div className="flex h-[10px] shrink-0 overflow-hidden bg-[#3b3a38]">
        <div className="mt-[-7px] ml-[1702px] h-[8px] w-[10px] rounded-full bg-[#d8d6d4]" />
      </div>
      <div className="flex h-[45px] shrink-0 items-start bg-[#fafafa] text-[17px] leading-[20px] tracking-[-0.300px] text-[#252423]">
        <div className="mt-[10px] ml-[12px] w-[94px]">Dosya</div>
        <div className="mt-[10px] w-[74px]">
          <div className="w-[36px] border-b-3 border-[#117865] pb-[5px] font-bold tracking-[-0.700px]">Giriş</div>
        </div>
        <div className="mt-[10px] w-[70px]">Ekle</div>
        <div className="mt-[10px] w-[127px]">Modelleme</div>
        <div className="mt-[10px] w-[118px]">Görüntüle</div>
        <div className="mt-[10px] w-[109px]">İyileştirin</div>
        <div className="mt-[10px]">Yardım</div>
        <div className="mt-[5px] ml-auto flex h-[30px] w-[107px] items-center rounded-l-[4px] bg-[#117865] pl-[9px] text-[14.500px] tracking-[-0.400px] text-white">
          <svg viewBox="0 0 20 18" className="h-[18px] w-[20px]" fill="none" stroke="#fff" strokeWidth="1.500">
            <path d="M1 5V17H15V13" />
            <path d="M12 1 19 7 12 13V9.500Q6 9 4 13 4.500 5 12 4.500Z" strokeLinejoin="round" />
          </svg>
          <span className="ml-[9px] w-[46px]">Paylaş</span>
          <svg viewBox="0 0 13 8" className="h-[8px] w-[13px]" fill="none" stroke="#fff" strokeWidth="1.500">
            <path d="M.7.8 6.500 6.800 12.300.8" />
          </svg>
        </div>
      </div>
      <div className="z-10 shrink-0 shadow-[0_1px_4px_rgba(0,0,0,0.25)]">
        <Ribbon />
      </div>
      <div className="flex h-[790px] shrink-0">
        <SideNav />
        <div className="flex w-[1417px] shrink-0 flex-col">
          <div className="flex h-[746px]">
            <div className="w-[1377px] border-r border-[#b9b98a] bg-[#e0e042]">
              <div className="ml-[32px] h-[738px] w-[1312px] border-x-2 border-b-2 border-dotted border-[#6b6b26]">
                <div className="flex h-[145px] justify-center pt-[60px] pr-[73px] text-[26.500px] leading-[36px] font-bold tracking-[-0.500px] text-black">Müşteri Segmentasyonu Paneli</div>
                <div className="flex h-[337px] gap-[55px] pl-[176px]">
                  <CustomerTable />
                  <MapCard />
                </div>
                <div className="flex items-start pl-[101px]">
                  <div className="mt-[3px]">
                    <Kpi label="Customer Count" />
                  </div>
                  <div className="ml-[36px]">
                    <PieCard />
                  </div>
                  <div className="ml-[43px]">
                    <Kpi label="Active Customer Count" />
                  </div>
                </div>
              </div>
            </div>
            <FiltersPane />
          </div>
          <PageTabs />
        </div>
        <VisualsPane />
        <DataPane />
      </div>
      <StatusBar />
    </div>
  );
}
